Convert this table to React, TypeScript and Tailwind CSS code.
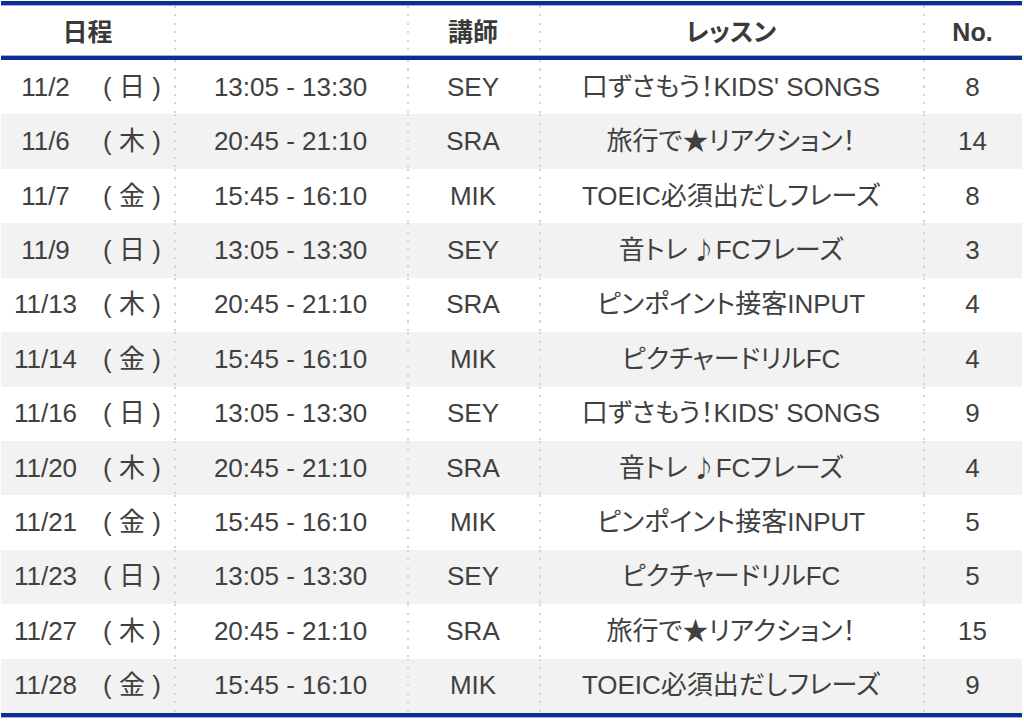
const rows = [
  { date: '11/2', day: '日', time: '13:05 - 13:30', teacher: 'SEY', lesson: "口ずさもう！KIDS' SONGS", no: 8 },
  { date: '11/6', day: '木', time: '20:45 - 21:10', teacher: 'SRA', lesson: '旅行で★リアクション！', no: 14 },
  { date: '11/7', day: '金', time: '15:45 - 16:10', teacher: 'MIK', lesson: 'TOEIC必須出だしフレーズ', no: 8 },
  { date: '11/9', day: '日', time: '13:05 - 13:30', teacher: 'SEY', lesson: '音トレ♪FCフレーズ', no: 3 },
  { date: '11/13', day: '木', time: '20:45 - 21:10', teacher: 'SRA', lesson: 'ピンポイント接客INPUT', no: 4 },
  { date: '11/14', day: '金', time: '15:45 - 16:10', teacher: 'MIK', lesson: 'ピクチャードリルFC', no: 4 },
  { date: '11/16', day: '日', time: '13:05 - 13:30', teacher: 'SEY', lesson: "口ずさもう！KIDS' SONGS", no: 9 },
  { date: '11/20', day: '木', time: '20:45 - 21:10', teacher: 'SRA', lesson: '音トレ♪FCフレーズ', no: 4 },
  { date: '11/21', day: '金', time: '15:45 - 16:10', teacher: 'MIK', lesson: 'ピンポイント接客INPUT', no: 5 },
  { date: '11/23', day: '日', time: '13:05 - 13:30', teacher: 'SEY', lesson: 'ピクチャードリルFC', no: 5 },
  { date: '11/27', day: '木', time: '20:45 - 21:10', teacher: 'SRA', lesson: '旅行で★リアクション！', no: 15 },
  { date: '11/28', day: '金', time: '15:45 - 16:10', teacher: 'MIK', lesson: 'TOEIC必須出だしフレーズ', no: 9 },
];

// dotted column divider drawn on the cell's left edge
const dots =
  'bg-[repeating-linear-gradient(to_bottom,#ddd5bc_0px,#ddd5bc_2px,transparent_2px,transparent_8.5px)] bg-no-repeat bg-[length:2px_100%] bg-[position:left_top]';

const cols = 'grid grid-cols-[173px_233px_132px_384px_1fr]';

const BlueLine = ({ lightFirst }: { lightFirst?: boolean }) => (
  <div className="flex flex-col">
    {lightFirst && <div className="h-px bg-[#9fb0dd]" />}
    <div className="h-[4px] bg-[#0f2d8e]" />
    {!lightFirst && <div className="h-px bg-[#9fb0dd]" />}
  </div>
);

// the ♪ is drawn full width, as in the source sheet
const Lesson = ({ text }: { text: string }) => {
  const parts = text.split('♪');
  if (parts.length === 1) return <>{text}</>;
  return (
    <>
      {parts[0]}
      <span className="font-['Noto_Sans_CJK_JP',sans-serif] [font-feature-settings:normal] text-[24px] pl-1">♪</span>
      {parts[1]}
    </>
  );
};

export default function App() {
  return (
    <div className="w-[1024px] h-[723px] bg-white pt-px pl-px font-['Liberation_Sans','Noto_Sans_CJK_JP',sans-serif] text-[#404040] [font-feature-settings:'palt']">
      <div className="w-[1021px]">
        <BlueLine />

        {/* header */}
        <div className={`${cols} h-[49px] text-[25px] font-bold text-[#3a3a3a]`}>
          <div className="flex items-center justify-center pt-1">日程</div>
          <div className={`${dots}`} />
          <div className={`${dots} flex items-center justify-center pt-1`}>講師</div>
          <div className={`${dots} flex items-center justify-center pt-1 font-semibold`}>レッスン</div>
          <div className={`${dots} flex items-center justify-center pt-1`}>No.</div>
        </div>

        <BlueLine lightFirst />

        {/* body */}
        <div className="h-[653px] grid grid-rows-12 text-[26px]">
          {rows.map((r, i) => (
            <div key={i} className={`${cols} ${i % 2 === 1 ? 'bg-[#f2f2f2]' : 'bg-white'}`}>
              <div className="flex items-center">
                <span className="w-[89px] text-center">{r.date}</span>
                <span className="flex-1 text-center">( {r.day} )</span>
              </div>
              <div className={`${dots} flex items-center justify-center`}>{r.time}</div>
              <div className={`${dots} flex items-center justify-center`}>{r.teacher}</div>
              <div className={`${dots} flex items-center justify-center`}>
                <span>
                  <Lesson text={r.lesson} />
                </span>
              </div>
              <div className={`${dots} flex items-center justify-center`}>{r.no}</div>
            </div>
          ))}
        </div>

        <BlueLine />
      </div>
    </div>
  );
}
